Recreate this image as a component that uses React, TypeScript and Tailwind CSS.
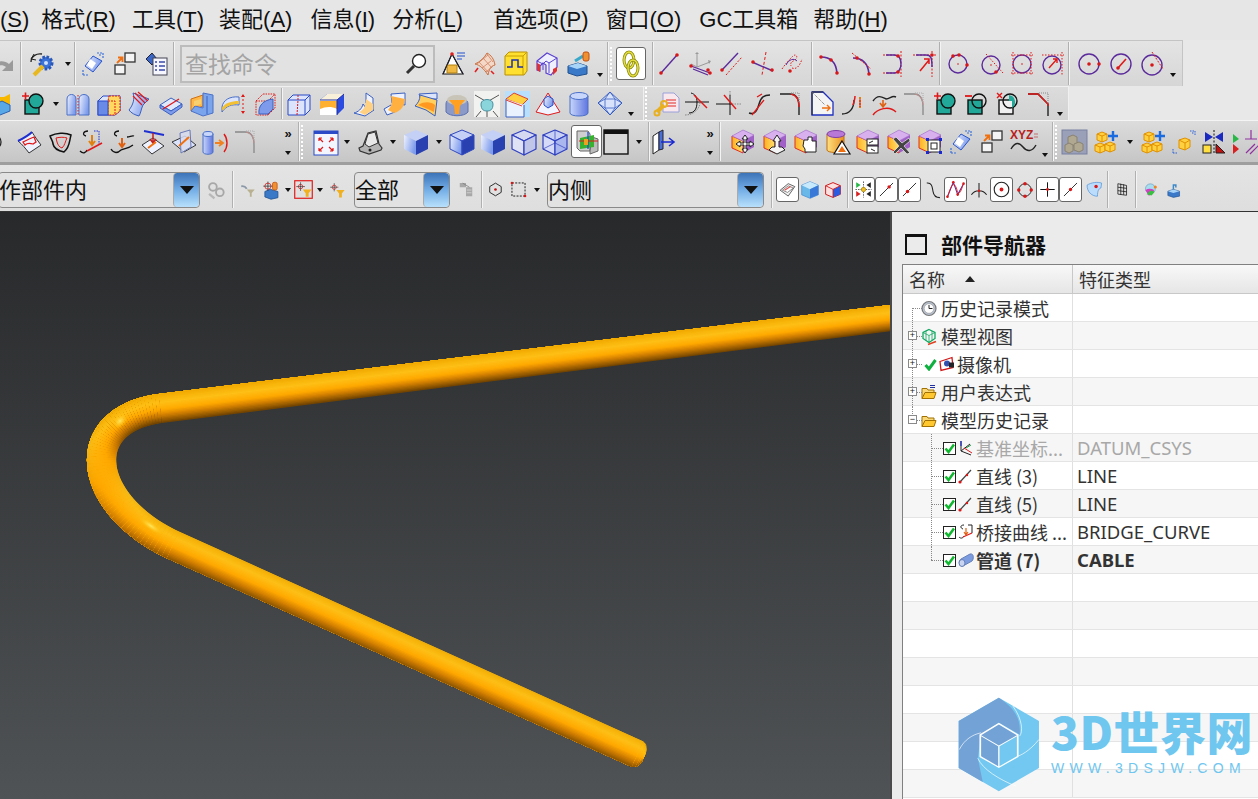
import React from "react";

const cjk = "font-['Noto_Sans_CJK_SC',sans-serif]";

const P = "#5b2a9b", R = "#e01818";

const Svg = ({ s = 26, children }: { s?: number; children: React.ReactNode }) => (
  <svg width={s} height={s} viewBox="0 0 26 26" fill="none" className="block shrink-0 overflow-visible">{children}</svg>
);
const D = ({ x, y, r = 1.8, c = "#d81818" }: { x: number; y: number; r?: number; c?: string }) => <circle cx={x} cy={y} r={r} fill={c} />;
const Box = ({ a = "url(#gB)", b = "url(#gB)", c = "#3046b8", st = "#2a4ac8", sw = 1, o = 1 }: any) => (
  <g stroke={st} strokeWidth={sw} strokeLinejoin="round" fillOpacity={o}>
    <path d="M13 1 25 6 13 12 1 6Z" fill={a} />
    <path d="M1 6 13 12V26L1 20Z" fill={b} />
    <path d="M25 6 13 12V26L25 20Z" fill={c} />
  </g>
);
const Pbox = ({ children }: any) => (
  <>
    <path d="M13 1 24 6V18L13 24 2 19V7Z" fill="#c58be0" />
    <path d="M2 7 13 12V24L2 19Z" fill="url(#gY)" stroke="#e03020" />
    <path d="M13 12 24 6V18L13 24Z" fill="#a060c8" />
    <path d="M2 7 13 1 24 6 13 12Z" fill="#d8b0ee" stroke="#a070c8" strokeWidth=".6" />
    {children}
  </>
);
const Teal = ({ m }: { m: string }) => (
  <>
    <rect x="4" y="9" width="14" height="14" fill={m === "x" ? "#f0f0f0" : "#22a898"} stroke="#111" strokeWidth="1.400" />
    <circle cx="15" cy="10" r="7" fill={m === "+" ? "#22a898" : "none"} stroke="#111" strokeWidth="1.400" />
    {m === "x" && <path d="M15 9h3v7a7 7 0 0 0 3-7 7 7 0 0 0-6-6Z" fill="#22a898" transform="translate(-1 1)" />}
    {m === "+" && <path d="M1 5h7M4.500 1.500v7" stroke={R} strokeWidth="1.600" />}
    {m === "-" && <path d="M1 5h7" stroke={R} strokeWidth="1.800" />}
    {m === "x" && <path d="M2 2l5 5M7 2 2 7" stroke={R} strokeWidth="1.400" />}
  </>
);
const Sq2 = () => (
  <>
    <rect x="13" y="2" width="10" height="9" fill="#f4f4f4" stroke="#333" strokeWidth="1.300" />
    <rect x="3" y="14" width="10" height="9" fill="#f4f4f4" stroke="#333" strokeWidth="1.300" />
    <path d="M5 12 10 7M6 6.500h4.500V11" stroke="#f07010" strokeWidth="1.800" />
  </>
);
const Sync = () => (
  <>
    <path d="M13 5 22 10 13 21 5 15Z" fill="url(#gB)" stroke="#2a55c8" />
    <path d="M10 8 16 12 12 18 7 14Z" fill="#fff" />
    <path d="M17 2h6v6M19 4h3M3 24v-6M3 24h6" stroke="#3a70d8" strokeDasharray="2 1" strokeWidth="1.200" />
  </>
);
const Blocks = () => (
  <g stroke="#e09000" fill="#ffd040" strokeWidth="1">
    <path d="M4 4l5-2 5 2v6l-5 2-5-2Z" /><path d="M4 4l5 2 5-2M9 6v6" fill="none" />
    <path d="M2 15l5-2 5 2v6l-5 2-5-2Z" /><path d="M2 15l5 2 5-2M7 17v6" fill="none" />
    <path d="M12 14l5-2 5 2v6l-5 2-5-2Z" /><path d="M12 14l5 2 5-2M17 16v6" fill="none" />
  </g>
);

const ic: Record<string, React.ReactNode> = {
  redo: <path d="M-8 20C-4 10 6 8 12 13L16 9V20H5L9 16C5 13-1 14-8 20Z" fill="#9a9a9a" />,
  gear: (
    <>
      <circle cx="17" cy="12" r="6" fill="#3a72d8" stroke="#2a58b8" strokeWidth="3" strokeDasharray="2.500 1.500" />
      <circle cx="17" cy="12" r="2" fill="#cfe0ff" />
      <path d="M14 15 5 24" stroke="#e8b820" strokeWidth="4" />
      <path d="M2 11C2 5 8 2 13 3" stroke="#222" strokeWidth="1.300" />
      <path d="M5 3 2 8l5 1" stroke="#222" strokeWidth="1" />
    </>
  ),
  sync: <Sync />,
  sq2: <Sq2 />,
  list: (
    <>
      <path d="M3 8 9 2l5 6-5 6Z" fill="#3a66c8" stroke="#223" />
      <rect x="10" y="7" width="14" height="17" fill="#f6f6ff" stroke="#445" />
      <path d="M12 11h2M16 11h6M12 15h2M16 15h6M12 19h2M16 19h6" stroke="#3a4aa8" strokeWidth="1.600" />
    </>
  ),
  pyr: (
    <>
      <path d="M11 3 2 23h20Z" fill="#fff" stroke="#111" strokeWidth="1.200" />
      <path d="M6 14h10v8H6Z" fill="#f0b840" stroke="#b08010" />
      <path d="M2 23 11 3l11 20" stroke="#223" />
      <circle cx="11" cy="3" r="1.800" fill="#e02020" />
      <path d="M16 2h8M16 5h8M16 8h5" stroke="#2050d0" strokeWidth="1.200" />
    </>
  ),
  grid: (
    <>
      <path d="M3 13C8 11 13 6 15 2c4 2 7 6 8 12-4 1-6 4-7 10C12 18 8 14 3 13Z" fill="#f4d8c8" stroke="#c87040" />
      <path d="M7 11l10 11M11 7l9 10M15 3l6 8M5 13l11-9M10 17l9-7M14 21l7-6" stroke="#d08060" strokeWidth=".8" />
      <path d="M6 17l-3 4M19 20l3 3" stroke="#e02020" strokeWidth="1.600" />
    </>
  ),
  ybox: (
    <>
      <path d="M2 5 6 1H24V20L21 24H2Z" fill="#ffe030" stroke="#b89000" />
      <path d="M2 5H20V24M20 5 24 1" stroke="#c8a000" />
      <path d="M4 16H9V9H15V16H20" stroke="#2030b0" strokeWidth="1.500" />
    </>
  ),
  frame: (
    <>
      <path d="M3 10 13 2l10 5v9l-6 8-5-2v-8l-3-2-3 3v5l-3-1Z" fill="#eef0ff" stroke="#5a40d0" strokeWidth="1.200" />
      <path d="M3 10l6 3 3-3 3 2 8-5M9 13v6M15 12v10" stroke="#5a40d0" />
      <path d="M3 19v-7l3 1.500V21Z" fill="#e03030" />
      <path d="M19 24v-6l4-2v4Z" fill="#e03030" />
    </>
  ),
  bfun: (
    <>
      <path d="M3 15 13 12 22 15V23L12 25 3 22Z" fill="#3a78c8" stroke="#205090" />
      <path d="M3 15 12 18 22 15 13 12Z" fill="#a8d4f8" />
      <path d="M10 10l8-5" stroke="#3aa8c8" strokeWidth="3" />
      <rect x="18" y="1" width="6" height="9" rx="2" fill="#f09030" stroke="#c05010" />
    </>
  ),
  chain: (
    <>
      <ellipse cx="11" cy="9" rx="5" ry="8" stroke="#8a8a10" strokeWidth="3" />
      <ellipse cx="11" cy="9" rx="5" ry="8" stroke="#e8e040" strokeWidth="1.400" />
      <ellipse cx="15" cy="17" rx="5" ry="8" stroke="#8a8a10" strokeWidth="3" />
      <ellipse cx="15" cy="17" rx="5" ry="8" stroke="#e8e040" strokeWidth="1.400" />
    </>
  ),
  l1: <><path d="M5 22 21 4" stroke={P} strokeWidth="1.400" /><D x={5} y={22} /><D x={21} y={4} /></>,
  l2: (
    <>
      <path d="M10 16V3M10 16l13-5M10 16l-6-3" stroke="#999" />
      <path d="M8 3h4L10 1Z M21 9l3 1-2 3Z" fill="#999" />
      <path d="M4 15 23 22M6 18l15 6" stroke={P} strokeWidth="1.300" />
      <D x={4} y={15} /><D x={23} y={22} /><D x={21} y={19} />
    </>
  ),
  l3: <><path d="M4 19 20 2" stroke={P} strokeWidth="1.400" /><path d="M8 24 24 6" stroke={R} strokeDasharray="2 1.500" /><D x={4} y={19} /></>,
  l4: <><path d="M17 1 13 24" stroke={R} strokeDasharray="3 2" /><path d="M3 11 24 20" stroke={P} strokeWidth="1.400" /><D x={4} y={11} /><D x={23} y={19} /></>,
  l5: (
    <>
      <path d="M2 18C6 12 10 8 13 5c4-3 5 2 2 4-3 2-5 2-4 6" stroke={R} strokeDasharray="1.500 1.500" />
      <path d="M12 17c5 2 8-3 10-9" stroke={R} strokeDasharray="1.500 1.500" />
      <path d="M6 14c3-6 8-7 11-4" stroke={P} /><D x={10} y={20} />
    </>
  ),
  a1: <><path d="M4 6C13 6 19 11 20 22" stroke={P} strokeWidth="1.600" /><D x={4} y={6} /><D x={14} y={9} /><D x={20} y={22} /></>,
  a2: <><path d="M4 7C13 7 19 12 20 23" stroke={P} strokeWidth="1.600" /><path d="M3 2 22 18" stroke={R} strokeDasharray="2 1.500" /><D x={8} y={7} /><D x={20} y={23} /></>,
  a3: <><path d="M3 4H17M3 22H17M21 0V26" stroke={R} strokeDasharray="2 1.500" /><path d="M6 4h8c6 0 7 5 7 9s-2 9-7 9H6" stroke={P} strokeWidth="1.400" /><D x={18} y={5} /><D x={18} y={21} /></>,
  a4: <><path d="M2 4H26M21 0V26" stroke={R} strokeDasharray="2 1.500" /><path d="M5 4h10c5 0 6 3 6 12" stroke={P} strokeWidth="1.400" /><path d="M9 20 18 9M13 8h5v5" stroke={R} strokeWidth="1.500" /><D x={21} y={4} /></>,
  c1: <><circle cx="13" cy="13" r="9" stroke={P} strokeWidth="1.400" /><D x={8} y={5} /><D x={14} y={4} /><D x={22} y={14} /><D x={13} y={13} r={.8} /></>,
  c2: <><circle cx="13" cy="14" r="9" stroke={P} strokeWidth="1.400" /><path d="M8 3 25 22" stroke={R} strokeDasharray="1.500 1.500" /><D x={18} y={21} /><D x={13} y={14} r={.8} /></>,
  c3: <><circle cx="13" cy="13" r="9" stroke={P} strokeWidth="1.400" /><path d="M2 4H24M2 22H24M4 1V25M22 1V25" stroke={R} strokeDasharray="1.500 1.500" /><D x={13} y={13} r={.8} /></>,
  c4: <><circle cx="12" cy="14" r="9" stroke={P} strokeWidth="1.400" /><path d="M2 4H24M22 1V25" stroke={R} strokeDasharray="1.500 1.500" /><path d="M9 17 17 8M13 8h4v4" stroke={R} strokeWidth="1.400" /></>,
  e1: <><circle cx="13" cy="13" r="10" stroke={P} strokeWidth="1.400" /><D x={13} y={13} /><D x={23} y={13} /></>,
  e2: <><circle cx="13" cy="13" r="10" stroke={P} strokeWidth="1.400" /><path d="M10 17 18 8" stroke={R} strokeWidth="1.600" /><D x={10} y={17} /></>,
  e3: <><circle cx="13" cy="14" r="10" stroke={P} strokeWidth="1.400" /><path d="M13 1 24 18" stroke={R} strokeDasharray="2 1.500" /><D x={13} y={14} /></>,
  cutL: <><path d="M-6 6H8L14 3V14L8 19-6 18Z" fill="#f8b800" /><path d="M-4 15 6 10 14 14V20L4 24-4 20Z" fill="#58a8e8" stroke="#2a60b0" /></>,
  tplus: <Teal m="+" />,
  tminus: <Teal m="-" />,
  tx: <Teal m="x" />,
  arch: (
    <>
      <path d="M2 24V8C2 2 11 2 11 8V24Z" fill="url(#gB)" stroke="#4a70c8" />
      <path d="M14 24V8C14 2 24 2 24 8V24Z" fill="url(#gB)" stroke="#4a70c8" />
      <path d="M13 4V24" stroke={R} strokeDasharray="1.500 1.500" />
    </>
  ),
  hbox: (
    <>
      <path d="M2 10 7 5H24V20L19 24H2Z" fill="#dbe4fb" stroke="#2a4ac8" />
      <path d="M13 5H24V20L19 24H12V10Z" fill="#ffd860" stroke={R} strokeDasharray="2 1" />
      <rect x="2" y="10" width="10" height="14" fill="#6a8ae8" stroke="#2a4ac8" />
      <path d="M12 10H19V24" stroke={R} strokeDasharray="2 1" />
    </>
  ),
  slit: (
    <>
      <path d="M6 2 22 8 16 14C14 18 14 22 12 25 8 24 4 22 2 19 6 14 8 8 6 2Z" fill="url(#gB)" stroke="#3a60c0" />
      <path d="M8 2 18 12M11 1 21 10M6 5 15 14" stroke={R} strokeWidth="1.200" />
    </>
  ),
  plate: <><path d="M2 14 13 7 24 13 13 20Z" fill="#e0e8fc" stroke="#3a60c0" /><path d="M2 14V17L13 24 24 16V13L13 20Z" fill="#7e9aea" stroke="#3a60c0" /><path d="M5 18 21 8" stroke={R} strokeWidth="1.300" /></>,
  pocket: (
    <>
      <path d="M2 8 14 4V15L2 20Z" fill="#ffb848" stroke="#d07010" />
      <path d="M14 2 24 4V22L14 25 2 20 6 15 14 17Z" fill="#7aa4ec" stroke="#4a70c8" />
      <path d="M5 10 12 8V13L5 15Z" fill="#f8d070" />
      <path d="M18 5V23" stroke="#3a60c0" />
    </>
  ),
  band: (
    <>
      <path d="M2 16C3 9 10 5 19 6V14C12 13 6 15 2 21Z" fill="#dbe4fb" stroke="#4a70c8" />
      <path d="M2 17C5 12 11 10 19 10V13C12 13 6 15 3 20Z" fill="#f2c030" />
      <path d="M23 4V22" stroke={R} strokeDasharray="2 2" /><path d="M21 6l2-3 2 3M21 20l2 3 2-3" fill={R} />
    </>
  ),
  dashc: (
    <>
      <path d="M5 10 12 3H24V17L17 24H5Z" fill="none" stroke={R} strokeDasharray="1.500 1" />
      <path d="M5 10H17V24M17 10 24 3" stroke={R} strokeDasharray="1.500 1" />
      <path d="M8 23C7 15 12 9 22 8V18L17 23Z" fill="#7e9aea" stroke="#3a60c0" />
    </>
  ),
  cubeL: (
    <>
      <path d="M2 9 7 4H24V19L19 24H2Z" fill="#dbe4fb" stroke="#2a4ac8" />
      <path d="M2 9H19V24M19 9 24 4" stroke="#2a4ac8" />
      <path d="M12 4V9L11 24" stroke={R} strokeDasharray="2 1" />
    </>
  ),
  orb: (
    <>
      <path d="M1 9 8 3H25V17L18 24H1Z" fill="#2a4ae0" />
      <path d="M1 9 8 3H25L18 9Z" fill="#f8f0d8" />
      <path d="M1 9H18V24H1Z" fill="#fff" />
      <path d="M1 10H18V18C12 15 6 16 1 18Z" fill="#ffb030" />
      <path d="M1 9H18V24M18 9 25 3" stroke="#2030a0" />
    </>
  ),
  f1: (
    <>
      <path d="M15 2 22 7V18L15 12Z" fill="#eef2ff" stroke="#3a60c0" />
      <path d="M3 22 14 25 23 19 15 17 12 13C11 18 7 21 3 22Z" fill="#eef2ff" stroke="#3a60c0" />
      <path d="M8 21C13 19 15 15 15 8L22 13V19L14 24Z" fill="#ffd080" />
    </>
  ),
  f2: (
    <>
      <path d="M9 3 23 2V14L10 12Z" fill="#eef2ff" stroke="#3a60c0" />
      <path d="M2 18 9 14 13 21 5 24Z" fill="#eef2ff" stroke="#3a60c0" />
      <path d="M9 5C11 13 9 15 6 19L12 22C19 20 22 16 23 8Z" fill="#ffb040" />
    </>
  ),
  f3: (
    <>
      <path d="M6 3 24 2V8H8Z" fill="#dbe4fb" stroke="#3a60c0" />
      <path d="M2 15 13 19 22 25 24 9 7 4C7 9 5 12 2 15Z" fill="#ffd060" stroke="#3a60c0" />
      <path d="M5 14C12 10 18 11 22 14L21 21C16 18 10 16 5 14Z" fill="#ff9820" />
    </>
  ),
  bowl: (
    <>
      <path d="M2 13C2 4 24 4 24 13V21C20 26 6 26 2 21Z" fill="#8c9ac8" stroke="#5a70b0" />
      <ellipse cx="13" cy="9" rx="10" ry="5" fill="#c8c4b8" />
      <path d="M5 9H21L16 15 15 23H11L10 15Z" fill="#ffa020" />
    </>
  ),
  tcorner: (
    <>
      <rect x="0" y="0" width="26" height="26" fill="#f2f2f0" />
      <path d="M1 4 13 11 25 4M13 20V26M2 26l5-6M24 26l-5-6" stroke="#555" />
      <path d="M7 13C7 7 19 7 19 13C19 19 16 20 13 20 10 20 7 19 7 13Z" fill="#8ad4dc" stroke="#4a90a0" />
    </>
  ),
  tchamf: (
    <>
      <rect x="1" y="0" width="25" height="26" fill="#b8e0fc" />
      <path d="M2 8 10 2 24 8 18 14 2 8Z" fill="#ffd040" stroke="#e04030" />
      <path d="M2 8V26H20V14" fill="#eaf2ff" stroke="#3a60c0" />
      <path d="M2 9 18 15" stroke="#e04030" />
    </>
  ),
  pyrR: (
    <>
      <path d="M13 2 25 21 13 24 1 21Z" fill="#f0f4ff" stroke={R} />
      <path d="M9 8 13 5 18 8V14L13 17 9 14Z" fill="url(#gB)" stroke="#2a4ac8" />
    </>
  ),
  cyl: (
    <>
      <path d="M4 5V22C4 26 22 26 22 22V5Z" fill="url(#gB2)" stroke="#4a70c8" />
      <ellipse cx="13" cy="5" rx="9" ry="3.500" fill="#c8d6fb" stroke="#4a70c8" />
    </>
  ),
  gem: (
    <>
      <path d="M13 1 25 12 13 24 1 12Z" fill="#d8e2fb" stroke="#3a60c0" />
      <path d="M1 12 8 8 13 1 18 8 25 12 18 17 13 24 8 17ZM8 8H18M8 17H18M8 8V17M18 8V17" stroke="#3a60c0" strokeWidth=".8" />
    </>
  ),
  wrdoc: (
    <>
      <path d="M9 2H20L25 7V21H9Z" fill="#f8e8ee" stroke="#9aa0d8" />
      <path d="M12 9h10M12 12h10M12 15h10" stroke="#e86868" strokeWidth="1.300" />
      <path d="M10 14 3 21" stroke="#e8b020" strokeWidth="4" />
      <circle cx="10" cy="13" r="3" stroke="#e8b020" strokeWidth="2" />
      <circle cx="3" cy="22" r="2.500" stroke="#e8b020" strokeWidth="2" />
    </>
  ),
  trim1: <><path d="M0 11H24" stroke="#111" /><path d="M4 22C10 22 12 17 12 11 12 6 10 3 6 2" stroke="#111" /><path d="M0 24C8 24 14 19 15 12" stroke="#888" strokeDasharray="1.500 1" /><path d="M9 4 22 17" stroke={R} strokeWidth="1.400" /></>,
  trim2: <><path d="M0 13H16M14 4V24" stroke="#111" /><path d="M16 13H25M14 0V10" stroke="#888" strokeDasharray="1.500 1" /><path d="M8 4 20 18" stroke={R} strokeWidth="1.400" /></>,
  scurve: <><path d="M2 22C8 24 10 20 12 13 14 6 17 4 23 4" stroke="#222" strokeWidth="1.400" /><path d="M5 24 17 9M10 6l5-3" stroke={R} strokeWidth="1.300" /></>,
  fil: <><path d="M2 3H12C18 3 21 8 21 16V24" stroke="#222" strokeWidth="1.400" /><path d="M13 3C18 4 21 8 21 16" stroke={R} strokeWidth="1.400" /><path d="M13 2H21V12" stroke="#888" strokeDasharray="1 1" /></>,
  sheet: <><path d="M3 1H14L24 11V24H3Z" fill="#f4f4f4" stroke="#2030c0" strokeWidth="1.300" /><path d="M3 24V1H14" stroke="#222" /><path d="M3 1 16 14" stroke="#666" strokeDasharray="1 1" /><path d="M13 17H21M18 14l3 3-3 3" stroke="#f07010" strokeWidth="1.400" /></>,
  brk: <><path d="M2 23C9 23 14 18 14 9" stroke="#222" strokeWidth="1.400" /><path d="M13 14C14 11 15 8 15 5" stroke={R} strokeWidth="1.500" /><path d="M20 6V18" stroke="#e08010" strokeWidth="2" strokeDasharray="2 1" /><path d="M20 8V16" stroke={R} /></>,
  flow: <><path d="M2 10C7 3 11 6 15 8 19 8 21 4 25 6" stroke="#222" strokeWidth="1.400" /><path d="M2 24C6 18 18 14 25 21" stroke={R} strokeWidth="1.400" /><path d="M12 9V15M9 12l3 4 3-4" stroke="#e06010" strokeWidth="1.600" /></>,
  filG: <><path d="M2 3H12C18 3 21 8 21 16V24" stroke="#888" strokeWidth="1.300" /><path d="M13 3C18 4 21 8 21 14" stroke="#c89090" /><path d="M13 2H21V12" stroke="#aaa" strokeDasharray="1 1" /></>,
  chamfR: <><path d="M2 3H12L22 13V25" stroke="#222" strokeWidth="1.400" /><path d="M2 3H12L22 13V15" stroke={R} strokeWidth="1.400" /><path d="M13 2H22V12" stroke="#888" strokeDasharray="1 1" /></>,
  targ: <><circle cx="0" cy="13" r="7" stroke="#222" strokeWidth="1.300" /><circle cx="0" cy="13" r="2.500" stroke="#c02020" strokeWidth="1.300" /></>,
  patch: <><path d="M2 12C8 9 13 6 16 3 19 8 22 12 25 16L13 24C10 20 6 15 2 12Z" fill="#eef2ff" stroke="#333" /><path d="M2 12C8 9 13 6 16 3" stroke="#2030d0" strokeWidth="2" /><path d="M7 13C11 11 15 9 18 8L20 13 17 15C14 14 11 14 9 16Z" stroke={R} strokeWidth="1.300" /></>,
  outl: <><path d="M3 7C9 4 18 3 24 6 22 13 23 18 17 23 12 22 7 20 6 15 6 12 4 10 3 7Z" stroke="#111" strokeWidth="1.500" /><path d="M9 9C13 8 17 8 20 9 18 13 18 16 15 19 12 18 11 16 10 13Z" stroke={R} /></>,
  br1: <><path d="M10 2C5 2 4 6 8 7M2 22C5 25 8 24 9 21" stroke="#111" strokeWidth="1.300" /><path d="M16 2H21V16" stroke="#2030d0" strokeDasharray="1.500 1" /><path d="M9 22 24 14" stroke={R} strokeWidth="1.500" /><path d="M14 6V15M11 12l3 4 3-4" stroke="#e08010" strokeWidth="2" /></>,
  br2: <><path d="M10 2C5 2 4 6 8 7M18 8C21 8 23 6 25 7M2 20C5 25 9 24 12 21 15 19 19 20 24 16" stroke="#111" strokeWidth="1.300" /><path d="M13 9V18M10 14l3 4 3-4" stroke="#e06010" strokeWidth="2" /></>,
  pl1: <><path d="M2 16 13 9 24 17 12 25Z" fill="#eef2ff" stroke="#333" /><path d="M4 2 24 6" stroke="#2030d0" strokeWidth="1.800" /><path d="M13 4V13M10 10l3 4 3-4" stroke="#c02020" strokeWidth="1.500" /><path d="M8 19 16 13" stroke="#f07010" strokeWidth="2" /></>,
  pl2: <><path d="M1 13 14 7 25 16 13 23Z" fill="#dbe4fb" stroke="#333" /><path d="M9 4 19 1 20 18 10 24Z" fill="#d8dcec" fillOpacity=".85" stroke="#6a7ab8" /><path d="M8 17 18 8" stroke="#f07010" strokeWidth="2" /></>,
  ext: <><path d="M1 5V23C1 26 11 26 11 23V5Z" fill="url(#gB2)" stroke="#4a70c8" /><ellipse cx="6" cy="5" rx="5" ry="2.500" fill="#c8d6fb" stroke="#4a70c8" /><path d="M13 14H20M17 11l4 3-4 3" stroke="#f08020" strokeWidth="1.800" /><path d="M22 5C26 10 26 18 22 23" stroke={R} strokeWidth="1.400" /></>,
  fit: <><rect x="1" y="2" width="24" height="24" fill="#f4f6ff" stroke="#2a4ac8" /><rect x="1" y="2" width="24" height="3" fill="#2a4ac8" /><path d="M6 9l4 4M6 9h3M6 9v3M20 9l-4 4M20 9h-3M20 9v3M6 22l4-4M6 22h3M6 22v-3M20 22l-4-4M20 22h-3M20 22v-3" stroke={R} strokeWidth="1.200" /></>,
  lens: <><path d="M2 19 6 17 11 4 19 2 22 15 25 19 24 21 12 25 3 22Z" fill="#b4b4b4" stroke="#333" strokeWidth="1.200" /><path d="M8 15 11 5 18 3 21 14 12 18Z" fill="#e8e8e8" stroke="#333" /><circle cx="13" cy="21" r="1.500" fill="#222" /></>,
  cubeS: <Box a="#c4d0f6" b="url(#gB)" c="#2840b0" st="none" />,
  cubeE: <Box a="#c4d0f6" b="url(#gB)" c="#2840b0" st="#3048c0" />,
  cubeW: <Box a="#d4d8f0" b="#dfe2f4" c="#c0c6e8" st="#3040c0" sw={1.200} />,
  cubeH: (
    <>
      <Box a="#c8d0f4" b="#d4daf8" c="#aab6ee" st="#3040c0" sw={1.200} />
      <path d="M1 20 13 14 25 20M13 1V14" stroke="#3040c0" strokeWidth=".7" />
    </>
  ),
  persp: (
    <>
      <path d="M3 2H14L16 5V22H6L3 19Z" fill="#cfcfcf" stroke="#666" />
      <path d="M18 8 24 10V22L16 25V22Z" fill="#bbb" stroke="#666" />
      <path d="M6 9 20 6V18L6 20Z" fill="#38b030" />
      <path d="M14 3V20" stroke="#2050e0" strokeWidth="1.300" /><path d="M5 12H24" stroke={R} strokeWidth="1" /><path d="M10 10h4v6h-4z" fill="#f0a020" />
    </>
  ),
  back: <><rect x="1" y="1" width="24" height="24" fill="#d8d8d8" stroke="#111" strokeWidth="1.400" /><rect x="1" y="1" width="24" height="4" fill="#111" /></>,
  pane: <><path d="M3 7 9 3V21L3 25Z" fill="#fff" stroke="#222" /><path d="M9 3 13 1V20L9 21Z" fill="#4a70d8" stroke="#223" /><path d="M11 13H23M19 9l5 4-5 4" stroke="#1a2ad0" strokeWidth="1.600" /></>,
  move: <Pbox><path d="M15 6l3 4h-2v4h4v-2l4 3-4 3v-2h-4v4h2l-3 4-3-4h2v-4H10v2l-4-3 4-3v2h4v-4h-2Z" fill="#f4f4f4" stroke="#222" /></Pbox>,
  lift: <Pbox><path d="M15 6l4 6h-2v6h3l3 3-8 4-8-4 3-3h3v-6h-2Z" fill="#f4f4f4" stroke="#222" /></Pbox>,
  hand: <Pbox><path d="M11 11h4v-3h4v4h4v11H12v-3l-2-3Z" fill="#fff" stroke="#222" /></Pbox>,
  cone: (
    <>
      <path d="M3 5V21C3 24 17 24 20 23V5Z" fill="url(#gY2)" stroke="#c07010" />
      <ellipse cx="12" cy="5" rx="9" ry="3.500" fill="#b878d8" stroke="#8040a8" />
      <path d="M18 12 26 25H10Z" fill="#fff" stroke="#111" strokeWidth="1.200" />
      <path d="M18 17 22 23H14Z" fill="#f07010" />
    </>
  ),
  rep: <Pbox><rect x="12" y="10" width="11" height="6" fill="#fff" stroke="#222" /><rect x="12" y="17" width="11" height="7" fill="#fff" stroke="#222" /><path d="M14 14l4-2M16 20l4 2" stroke="#222" /></Pbox>,
  del: <Pbox><path d="M7 10l3-2 6 6 7-5 1 3-6 5 6 7-3 1-6-6-6 6-2-2 6-6Z" fill="#444" stroke="#fff" strokeWidth=".6" /></Pbox>,
  res: <Pbox><rect x="11" y="11" width="12" height="12" fill="#fff" stroke="#222" /><rect x="14" y="14" width="6" height="6" fill="none" stroke="#222" /><rect x="9" y="9" width="3" height="3" fill="#1a2ad0" /><rect x="22" y="9" width="3" height="3" fill="#1a2ad0" /><rect x="9" y="22" width="3" height="3" fill="#1a2ad0" /><rect x="22" y="22" width="3" height="3" fill="#1a2ad0" /></Pbox>,
  xyz: (
    <>
      <text x="0" y="10" fontSize="12" fontWeight="700" fill="#b82020" fontFamily="Liberation Sans, sans-serif">XYZ</text>
      <path d="M24 5h4M24 8h4" stroke="#c89090" strokeWidth="1.600" />
      <path d="M1 20C5 13 9 13 13 18 17 23 22 23 26 16" stroke="#222" strokeWidth="1.400" />
    </>
  ),
  asm: (
    <>
      <rect x="0" y="1" width="25" height="24" fill="#9aa0b8" stroke="#7880a0" />
      <path d="M6 8l5-2 4 2v7l-4 2-5-2Z" fill="#b0a890" stroke="#8a8270" />
      <path d="M3 16l4-2 4 2v6l-4 2-4-2Z" fill="#b0a890" stroke="#8a8270" />
      <path d="M12 15l5-2 4 2v6l-4 2-5-2Z" fill="#b0a890" stroke="#8a8270" />
    </>
  ),
  blkP: <><g transform="translate(0 1)"><Blocks /></g><path d="M20 2V12M15 7H25" stroke="#1a6ae0" strokeWidth="2.400" /></>,
  blkD: (
    <>
      <g stroke="#e09000" fill="#ffd040"><path d="M9 11l6-2 5 2v7l-5 3-6-2Z" /><path d="M9 11l6 3 5-3M15 14v7" fill="none" /></g>
      <path d="M20 2h5v5M22 4h2M3 24v-5M3 24h5" stroke="#2a60d8" strokeDasharray="1.500 1" />
    </>
  ),
  mirror: (
    <>
      <path d="M4 3 12 8 4 13ZM22 3 14 8 22 13Z" fill="#1a2ac0" />
      <path d="M13 1V25" stroke="#111" strokeDasharray="2 1.500" />
      <rect x="2" y="16" width="8" height="8" fill="#ffe040" stroke="#222" />
      <path d="M15 15 24 24H15Z" fill="#c01010" stroke="#222" />
    </>
  ),
  cons: <><path d="M1 5 7 10 1 14Z" fill="#28b848" /><path d="M1 15 7 20 1 25Z" fill="#d82020" /><path d="M13 10H25M19 1V10" stroke="#9030a0" strokeWidth="1.200" /><path d="M14 24 23 15M18 25 27 16" stroke="#9030a0" strokeWidth="1.200" /></>,
  ring2: <><circle cx="9" cy="9" r="5" stroke="#a8a8a8" strokeWidth="2.400" /><circle cx="18" cy="16" r="5" stroke="#a8a8a8" strokeWidth="2.400" /><path d="M4 18l7 6" stroke="#b8b8b8" strokeWidth="3" /></>,
  wrf: <><path d="M2 7c4-1 7 1 9 4" stroke="#8a98a8" strokeWidth="3" /><path d="M11 12H24L19 18V24H16V18Z" fill="#b8b090" /></>,
  tbox: <><path d="M5 15 12 12 22 15V23L13 25 5 22Z" fill="#3a78c8" stroke="#205090" /><circle cx="9" cy="8" r="4" stroke={R} strokeWidth="1" /><path d="M9 2V14M3 8H15" stroke="#222" strokeWidth=".9" /><rect x="15" y="3" width="6" height="10" rx="2" fill="#f09030" stroke="#c05010" /></>,
  fsel: <><rect x="1" y="1" width="24" height="24" fill="none" stroke={R} strokeWidth="1.600" /><circle cx="9" cy="9" r="3" stroke={R} /><path d="M9 3V15M3 9H15" stroke="#222" strokeWidth=".8" /><path d="M12 13H24L20 18V23H16V18Z" fill="#f0b020" /></>,
  fpt: <><circle cx="9" cy="9" r="3" stroke={R} /><path d="M9 3V15M3 9H15" stroke="#222" strokeWidth=".8" /><path d="M12 13H24L20 18V24H16V18Z" fill="#f0b020" /></>,
  chainG: <><path d="M4 3h9v6H4ZM13 9h9v13H13Z" fill="#a8a8a8" /><path d="M8 3 18 9" stroke="#777" /><path d="M14 13h7M14 17h7" stroke="#e0e0e0" /></>,
  hex: <><path d="M13 2 23 8V18L13 24 3 18V8Z" stroke="#222" strokeWidth="1.600" transform="translate(1.500 1.500) scale(.88)" /><circle cx="13" cy="13" r="2" fill="#c01010" /></>,
  dsq: <><path d="M3 3H23V23H3Z" stroke="#111" strokeWidth="1.400" strokeDasharray="3 2" /><D x={3} y={3} r={2} /><D x={23} y={23} r={2} /></>,
  v1: <><path d="M3 14 14 5 23 9 14 22Z" fill="#f2f2f2" stroke="#333" /><path d="M6 14l8-6 7 3-8 6Z" fill="#fff" stroke="#666" /><path d="M9 14l8-5" stroke="#e05050" strokeWidth="1.600" /></>,
  v2: <><path d="M13 1 25 6V20L13 25 1 20V6Z" fill="#6ab8e8" stroke="#3a88d8" /><path d="M1 6 13 12 25 6 13 1Z" fill="#c8e8fb" /><path d="M13 12 25 6V20L13 25Z" fill="#3a78d8" /></>,
  v3: <><path d="M13 1 25 6V20L13 25 1 20V6Z" fill="#fbe0e0" stroke="#d01818" strokeWidth="1.600" /><path d="M13 12 25 6V20L13 25Z" fill="#2a5ae0" /><path d="M1 6 13 12 25 6M13 12V25" stroke="#d01818" strokeWidth="1.400" /></>,
  all: <><path d="M13 2V24M2 13H24" stroke="#222" strokeDasharray="2 1.500" /><circle cx="13" cy="13" r="3" fill="#f0c020" stroke="#a08010" /><path d="M3 3l6 4-6 4Z" fill="#28b848" /><path d="M23 3l-6 4 6 4ZM23 15l-6 4 6 4Z" fill="#222" /><path d="M3 15l6 4-6 4Z" fill="#d82020" /></>,
  seg: <><path d="M3 23 23 3" stroke="#222" strokeWidth="1.400" /><D x={17} y={9} r={2.600} /></>,
  seg2: <><path d="M3 23 23 3" stroke="#222" strokeWidth="1.400" /><D x={10} y={16} r={2.600} /></>,
  sc: <path d="M4 3C12 2 12 10 13 15 14 22 17 24 23 24" stroke="#222" strokeWidth="1.500" />,
  spl: <><path d="M2 23 10 3 16 20 24 5" stroke={P} strokeWidth="1.400" /><path d="M2 23C6 12 8 4 12 7 16 12 15 19 18 18 21 16 22 9 24 5" stroke={R} strokeWidth="1.200" /><D x={10} y={3} /><D x={16} y={20} /><D x={2} y={23} /><D x={24} y={5} /></>,
  perp: <><path d="M2 20C7 12 19 12 24 20M13 3V24" stroke="#222" strokeWidth="1.500" /><D x={13} y={14} /></>,
  ctr: <><circle cx="13" cy="13" r="10" stroke="#222" strokeWidth="1.500" /><D x={13} y={13} r={2.600} /></>,
  quad: <><circle cx="13" cy="13" r="9" stroke="#222" strokeWidth="1.400" /><D x={13} y={4} r={2.500} /><D x={13} y={22} r={2.500} /><D x={4} y={13} r={2.500} /><D x={22} y={13} r={2.500} /></>,
  cross: <><path d="M13 2V24M2 13H24" stroke="#111" strokeWidth="1.500" /><D x={13} y={13} r={2.200} /></>,
  pm: <><path d="M3 23 23 3" stroke="#222" strokeWidth="1.400" /><D x={13} y={13} r={2.500} /></>,
  srf: <><path d="M3 6C9 2 18 1 24 3L23 10C20 11 18 14 18 22 10 22 3 16 3 6Z" fill="#bcdcfb" stroke="#4a90d8" /><D x={16} y={8} r={2.500} /></>,
  gridI: <path d="M5 3 20 6V23L5 21ZM10 3V22M15 4V22M5 9 20 11M5 15 20 17" stroke="#111" strokeWidth="1.300" />,
  rgb: <><circle cx="12" cy="11" r="8" fill="#a8dcf0" stroke="#6a98b8" /><path d="M4 13c5-3 10-2 14 0-2 8-6 9-9 9Z" fill="#d040c0" /><path d="M6 20l6-6 7 2-5 6Z" fill="#38c040" /><D x={20} y={8} r={2.500} c="#f08020" /></>,
  rbf: <><path d="M3 15 12 12 22 15V23L12 25 3 22Z" fill="#3a78c8" stroke="#205090" /><path d="M3 15 12 18 22 15 12 12Z" fill="#a8d4f8" /><path d="M12 12V5h4v4" stroke="#3a88c8" strokeWidth="2.400" /></>,
};

const I = ({ n, s = 26, w = "w-[31px]" }: { n: string; s?: number; w?: string }) => (
  <div className={`${w} flex justify-center items-center shrink-0`}>
    <Svg s={s}>{ic[n]}</Svg>
  </div>
);
const I4 = ({ n, s = 20, w = "w-[23px]" }: { n: string; s?: number; w?: string }) => <I n={n} s={s} w={w} />;
const Bx = ({ n, s = 20, w = "w-[23px]" }: { n: string; s?: number; w?: string }) => (
  <div className={`${w} flex justify-center shrink-0`}>
    <div className="w-[23px] h-[25px] rounded-[3px] border border-[#666] bg-white flex items-center justify-center">
      <Svg s={s - 3}>{ic[n]}</Svg>
    </div>
  </div>
);
const Caret = ({ w = "w-[12px]", cls = "" }: { w?: string; cls?: string }) => (
  <div className={`${w} ${cls} flex justify-center shrink-0`}>
    <div className="w-0 h-0 border-l-[3.5px] border-r-[3.5px] border-t-[4px] border-l-transparent border-r-transparent border-t-[#111]" />
  </div>
);
const Sep = ({ cls = "" }: { cls?: string }) => (
  <div className={`w-[2px] self-stretch my-[1px] shrink-0 border-l border-[#b0b0b0] bg-[#f4f4f4] ${cls}`} />
);
const Grip = () => <div className="w-[3px] h-[34px] mx-[1px] shrink-0 border-l-2 border-dotted border-white" />;
const Chev = () => (
  <div className="w-[14px] h-full flex flex-col items-center justify-between py-[7px] shrink-0">
    <span className="text-[13px] leading-[12px] font-bold font-['Liberation_Sans',sans-serif] text-[#111]">»</span>
    <Caret />
  </div>
);

const menu: [string, string, string][] = [
  ["", "S", "mr-[12px]"],
  ["格式", "R", "mr-[16px]"],
  ["工具", "T", "mr-[15px]"],
  ["装配", "A", "mr-[18px]"],
  ["信息", "I", "mr-[17px]"],
  ["分析", "L", "mr-[30px]"],
  ["首选项", "P", "mr-[17px]"],
  ["窗口", "O", "mr-[18px]"],
];

const Combo = ({ t, cls }: { t: string; cls: string }) => (
  <div className={`${cls} h-[36px] shrink-0 flex items-stretch rounded-[4px] border border-[#8a8a8a] bg-[#e2e2e2] overflow-hidden`}>
    <div className={`flex-1 text-[22px] leading-[31px] text-[#111] whitespace-nowrap ${cjk}`}>{t}</div>
    <div className="w-[26px] flex items-center justify-center bg-gradient-to-b from-[#3d74b8] via-[#74aee6] to-[#b8e0fb] border-l border-[#aaa] rounded-[4px]">
      <div className="w-0 h-0 border-l-[7px] border-r-[7px] border-t-[8px] border-l-transparent border-r-transparent border-t-[#111]" />
    </div>
  </div>
);

/* ---------- tube: a lit cylinder swept along the centre line ---------- */
function buildTube() {
  type S = { x: number; y: number; h: number };
  const bez = (p: number[][], n: number, h0: number, h1: number): S[] => {
    const out: S[] = [];
    for (let i = 0; i <= n; i++) {
      const t = i / n, u = 1 - t;
      out.push({
        x: u * u * u * p[0][0] + 3 * u * u * t * p[1][0] + 3 * u * t * t * p[2][0] + t * t * t * p[3][0],
        y: u * u * u * p[0][1] + 3 * u * u * t * p[1][1] + 3 * u * t * t * p[2][1] + t * t * t * p[3][1],
        h: h0 + (h1 - h0) * t,
      });
    }
    return out;
  };
  const endX = 644, endY = 757;
  const pts: S[] = [
    { x: 895, y: 317.5, h: 13 },
    ...bez([[160, 408.5], [125, 413], [101.5, 432], [101.5, 460]], 30, 14.6, 14.6),
    ...bez([[101.5, 460], [101.5, 490], [128, 524], [173, 545]], 30, 14.6, 14.6).slice(1),
  ];
  const dx = 0.9, dy = 0.41;
  const rest = 7;
  pts.push({ x: endX - dx * rest, y: endY - dy * rest, h: 14 });
  [0.5, 0.75, 0.9, 1].forEach((f) => {
    const d = rest * f;
    pts.push({ x: endX - dx * rest + dx * d, y: endY - dy * rest + dy * d, h: 14 * Math.sqrt(Math.max(0.08, 1 - f * f * 0.85)) });
  });

  /* u = 1 faces up, u = -1 faces down */
  const stops: [number, number[]][] = [
    [-1, [112, 66, 0]], [-0.8, [148, 90, 0]], [-0.45, [212, 128, 0]], [-0.1, [255, 168, 0]],
    [0.4, [255, 192, 22]], [1, [250, 176, 0]],
  ];
  const ramp = (u: number, edge: number) => {
    let c = stops[stops.length - 1][1];
    for (let i = 1; i < stops.length; i++) {
      if (u <= stops[i][0]) {
        const [a0, c0] = stops[i - 1], [a1, c1] = stops[i];
        const f = Math.max(0, (u - a0) / (a1 - a0));
        c = c0.map((v, k) => v + (c1[k] - v) * f);
        break;
      }
    }
    return `rgb(${c.map((v) => Math.round(v * edge)).join(",")})`;
  };
  const up = [-0.2, -0.98];
  const N = 22;
  const polys: { d: string; c: string }[] = [];
  const normal = (i: number) => {
    const a = pts[Math.max(0, i - 1)], b = pts[Math.min(pts.length - 1, i + 1)];
    const tx = b.x - a.x, ty = b.y - a.y, l = Math.hypot(tx, ty) || 1;
    return [-ty / l, tx / l];
  };
  for (let i = 0; i < pts.length - 1; i++) {
    const j = Math.min(pts.length - 1, i + (i > 0 && i < pts.length - 6 ? 2 : 1));
    const n0 = normal(i), n1 = normal(j);
    const ni1 = normal(i + 1);
    const nm = [(n0[0] + ni1[0]) / 2, (n0[1] + ni1[1]) / 2];
    const facing = nm[0] * up[0] + nm[1] * up[1];
    const p = (s: S, n: number[], t: number) => `${(s.x + n[0] * s.h * t).toFixed(1)} ${(s.y + n[1] * s.h * t).toFixed(1)}`;
    /* each band runs from its lower edge to the far edge, painted in order, so no seam shows */
    for (let b = 0; b < N; b++) {
      const t0 = -1 + (2 * b) / N, tm = t0 + 1 / N;
      const z = Math.sqrt(Math.max(0, 1 - tm * tm));
      polys.push({
        d: `M${p(pts[i], n0, t0)}L${p(pts[i], n0, 1)}L${p(pts[j], n1, 1)}L${p(pts[j], n1, t0)}Z`,
        c: ramp(tm * facing, 0.94 + 0.06 * z),
      });
    }
  }
  return polys;
}
const tube = buildTube();

const rows: { t: string; lvl: 0 | 1; box?: "+" | "-"; icon: string; check?: boolean; gray?: boolean; bold?: boolean; ty?: string }[] = [
  { t: "历史记录模式", lvl: 0, icon: "clock" },
  { t: "模型视图", lvl: 0, box: "+", icon: "view" },
  { t: "摄像机", lvl: 0, box: "+", icon: "cam", check: true },
  { t: "用户表达式", lvl: 0, box: "+", icon: "fold" },
  { t: "模型历史记录", lvl: 0, box: "-", icon: "fold2" },
  { t: "基准坐标...", lvl: 1, icon: "csys", gray: true, ty: "DATUM_CSYS" },
  { t: "直线 (3)", lvl: 1, icon: "line", ty: "LINE" },
  { t: "直线 (5)", lvl: 1, icon: "line", ty: "LINE" },
  { t: "桥接曲线 ...", lvl: 1, icon: "bridge", ty: "BRIDGE_CURVE" },
  { t: "管道 (7)", lvl: 1, icon: "pipe", bold: true, ty: "CABLE" },
];

const tico: Record<string, React.ReactNode> = {
  clock: <><circle cx="8" cy="8" r="7" fill="#b8c2d0" stroke="#777" strokeWidth="1.200" /><circle cx="8" cy="8" r="4.800" fill="#fff" stroke="#888" strokeWidth=".5" /><path d="M8 4.500V8H11.500" stroke="#222" /></>,
  view: <><path d="M8 1 14 4V10L8 14 2 10V4Z" stroke="#10a860" strokeWidth="1.300" /><path d="M2 4 8 7 14 4M8 7V14M5 2.500V12M11 2.500V12" stroke="#10a860" strokeWidth=".8" /><path d="M7 16 15 13" stroke="#e04020" strokeWidth="1.400" /></>,
  cam: <><path d="M1 5 13 1 14 11 2 14Z" fill="#fff" stroke="#d01818" strokeWidth="1.300" /><circle cx="8" cy="7" r="3" fill="#3050b0" /><rect x="10" y="6" width="5" height="5" fill="#222" /></>,
  fold: <><path d="M1 14V4H6L7 5.500H13V8" stroke="#a07000" fill="#f8d878" /><path d="M1 14 4 8H15L13 14Z" fill="#ffc830" stroke="#a07000" /><path d="M9 1h5M9 3h5" stroke="#2030a0" /></>,
  fold2: <><path d="M1 14V4H6L7 5.500H13V8" stroke="#a07000" fill="#f8d878" /><path d="M1 14 4 8H15L13 14Z" fill="#ffc830" stroke="#a07000" /></>,
  csys: <><path d="M3 1V11L13 15M3 11 12 4" stroke="#222" /><path d="M3 1V6" stroke="#2030d0" strokeWidth="1.200" /><path d="M6 8 14 13" stroke={R} /><path d="M8 8l5-3" stroke="#20a040" /></>,
  line: <><path d="M2 14 13 2" stroke="#444" strokeWidth="1.200" /><D x={2} y={14} r={1.600} /><D x={9} y={7} r={1.200} /></>,
  bridge: <><path d="M6 1C2 1 2 4 5 5M1 13c2 2 4 1 5-1M10 1h4v8" stroke="#222" /><path d="M5 13 14 9" stroke={R} strokeWidth="1.200" /><path d="M8 4V10M6 8l2 3 2-3" stroke="#e06010" strokeWidth="1.200" /></>,
  pipe: <><path d="M3 7 12 2C16 1 16 7 14 9L5 14C1 14 0 9 3 7Z" fill="#7d9ce0" stroke="#6680b8" /><ellipse cx="4" cy="11" rx="3" ry="3.500" fill="#c8d4f0" stroke="#6680b8" /></>,
};

const Chk = () => (
  <div className="w-[13px] h-[13px] border border-[#222] bg-white flex items-center justify-center shrink-0">
    <svg width="11" height="11" viewBox="0 0 11 11" className="block"><path d="M1.500 5.500 4.500 9 10 1.500" stroke="#10b830" strokeWidth="2.600" fill="none" /></svg>
  </div>
);

export default function App() {
  return (
    <div className="w-[1258px] h-[799px] overflow-hidden flex flex-col bg-[#e8e8e8] relative">
      <svg className="absolute w-0 h-0">
        <defs>
          <linearGradient id="gB" x1="0" y1="0" x2="1" y2="0.400"><stop offset="0" stopColor="#eef2fe" /><stop offset="1" stopColor="#7e9cec" /></linearGradient>
          <linearGradient id="gB2" x1="0" y1="0" x2="1" y2="0"><stop offset="0" stopColor="#c8d6fb" /><stop offset="1" stopColor="#5e76e0" /></linearGradient>
          <linearGradient id="gY" x1="0" y1="0" x2="1" y2="0"><stop offset="0" stopColor="#ffb020" /><stop offset="1" stopColor="#ffe070" /></linearGradient>
          <linearGradient id="gY2" x1="0" y1="0" x2="1" y2="0"><stop offset="0" stopColor="#ffe080" /><stop offset="1" stopColor="#e89020" /></linearGradient>
          <radialGradient id="spec"><stop offset="0" stopColor="#ffe860" /><stop offset=".5" stopColor="#ffd030" stopOpacity=".6" /><stop offset="1" stopColor="#ffc000" stopOpacity="0" /></radialGradient>
        </defs>
      </svg>

      {/* menu */}
      <div className="h-[40px] shrink-0 flex items-center pb-[1px] bg-[#e6e6e6] text-[22px] text-[#111] whitespace-nowrap font-['Liberation_Sans','Noto_Sans_CJK_SC',sans-serif]">
        {menu.map(([a, b, m]) => (
          <span key={b} className={m}>
            {a}(<span className="underline underline-offset-[3px]">{b}</span>)
          </span>
        ))}
        <span className="mr-[15px]">GC工具箱</span>
        <span>帮助(<span className="underline underline-offset-[3px]">H</span>)</span>
      </div>

      {/* row 1 */}
      <div className="h-[46px] shrink-0 flex items-center w-[1183px] bg-gradient-to-b from-[#e4e4e4] to-[#d6d6d6] border-t border-[#c4c4c4] border-r">
        <I n="redo" w="w-[20px]" />
        <Sep />
        <I n="gear" w="w-[40px]" />
        <Caret w="w-[12px]" />
        <Sep />
        <I n="sync" w="w-[33px]" />
        <I n="sq2" />
        <I n="list" />
        <div className="w-[2px] shrink-0" />
        <Sep />
        <div className="ml-[5px] w-[255px] h-[38px] shrink-0 border-2 border-[#bcbcbc] bg-[#e2e2e2] flex items-center justify-between px-[3px]">
          <span className={`text-[23px] text-[#a4a4a4] ${cjk}`}>查找命令</span>
          <svg width="24" height="24" viewBox="0 0 24 24" fill="none" className="mr-[2px]">
            <circle cx="15" cy="9" r="6.500" fill="#fff" stroke="#222" strokeWidth="1.400" />
            <path d="M10 14 3 21" stroke="#333" strokeWidth="3" />
          </svg>
        </div>
        <div className="w-[3px] shrink-0" />
        <I n="pyr" />
        <I n="grid" />
        <I n="ybox" />
        <I n="frame" />
        <I n="bfun" />
        <Caret w="w-[14px]" cls="self-end mb-[9px]" />
        <Sep />
        <Grip />
        <div className="w-[30px] h-[33px] ml-[2px] shrink-0 rounded-[3px] border border-[#666] bg-white flex items-center justify-center">
          <Svg s={26}>{ic.chain}</Svg>
        </div>
        <div className="w-[6px] shrink-0" />
        <Sep />
        <I n="l1" w="w-[30px]" />
        <I n="l2" />
        <I n="l3" />
        <I n="l4" />
        <I n="l5" />
        <Sep cls="ml-[3px]" />
        <I n="a1" w="w-[33px]" />
        <I n="a2" />
        <I n="a3" />
        <I n="a4" />
        <Sep />
        <I n="c1" w="w-[34px]" />
        <I n="c2" />
        <I n="c3" />
        <I n="c4" />
        <Sep />
        <div className="w-[3px] shrink-0" />
        <I n="e1" w="w-[32px]" />
        <I n="e2" />
        <I n="e3" />
        <Caret cls="self-end mb-[9px]" />
      </div>

      {/* row 2 */}
      <div className="h-[34px] shrink-0 flex items-center">
        <div className="h-[34px] w-[643px] shrink-0 flex items-center bg-gradient-to-b from-[#dcdcdc] to-[#d2d2d2] border-t border-[#f0f0f0]">
          <I n="cutL" w="w-[18px]" />
          <I n="tplus" w="w-[32px]" />
          <Caret w="w-[12px]" />
          <I n="arch" />
          <I n="hbox" />
          <I n="slit" />
          <I n="plate" />
          <I n="pocket" />
          <I n="band" />
          <I n="dashc" />
          <div className="w-[2px] shrink-0" />
          <Sep />
          <I n="cubeL" w="w-[32px]" />
          <I n="orb" w="w-[33px]" />
          <I n="f1" />
          <I n="f2" />
          <I n="f3" />
          <I n="bowl" />
          <I n="tcorner" w="w-[30px]" />
          <I n="tchamf" w="w-[30px]" />
          <I n="pyrR" />
          <I n="cyl" />
          <I n="gem" />
          <Caret w="w-[12px]" cls="self-end mb-[4px]" />
        </div>
        <div className="h-[34px] w-[426px] shrink-0 flex items-center bg-gradient-to-b from-[#dcdcdc] to-[#d2d2d2] border-t border-[#f0f0f0] border-l border-r border-[#c4c4c4]">
          <Grip />
          <div className="w-[2px] shrink-0" />
          <I n="wrdoc" />
          <I n="trim1" />
          <I n="trim2" />
          <I n="scurve" />
          <I n="fil" />
          <I n="sheet" />
          <I n="brk" />
          <I n="flow" />
          <I n="filG" />
          <I n="tplus" />
          <I n="tminus" />
          <I n="tx" />
          <I n="chamfR" />
          <Caret w="w-[12px]" cls="self-end mb-[4px]" />
        </div>
      </div>

      {/* row 3 */}
      <div className="h-[45px] shrink-0 flex items-center bg-gradient-to-b from-[#dcdcdc] to-[#c6c6c6] border-t border-[#f4f4f4] border-b-[3px] border-b-[#9e9e9e]">
        <I n="targ" w="w-[13px]" />
        <I n="patch" />
        <I n="outl" />
        <I n="br1" />
        <I n="br2" />
        <I n="pl1" />
        <I n="pl2" />
        <I n="ext" />
        <I n="filG" />
        <div className="w-[20px] shrink-0" />
        <Chev />
        <Sep cls="ml-[3px]" />
        <Grip />
        <div className="w-[7px] shrink-0" />
        <I n="fit" w="w-[27px]" />
        <Caret w="w-[15px]" />
        <I n="lens" />
        <Caret w="w-[15px]" />
        <I n="cubeS" />
        <Caret w="w-[15px]" />
        <I n="cubeE" />
        <I n="cubeS" />
        <I n="cubeW" />
        <I n="cubeH" />
        <div className="w-[31px] h-[33px] ml-[1px] shrink-0 rounded-[3px] border border-[#666] bg-white flex items-center justify-center">
          <Svg s={26}>{ic.persp}</Svg>
        </div>
        <I n="back" w="w-[28px]" />
        <Caret w="w-[18px]" />
        <Sep />
        <I n="pane" w="w-[26px]" />
        <div className="w-[27px] shrink-0" />
        <Chev />
        <div className="w-[2px] shrink-0" />
        <Sep />
        <div className="w-[6px] shrink-0" />
        <I n="move" w="w-[32px]" />
        <I n="lift" />
        <I n="hand" />
        <I n="cone" />
        <I n="rep" />
        <I n="del" />
        <I n="res" />
        <I n="sync" />
        <I n="sq2" />
        <I n="xyz" />
        <Caret w="w-[14px]" cls="self-end mb-[5px]" />
        <Sep />
        <Grip />
        <I n="asm" />
        <I n="blkP" />
        <Caret w="w-[18px]" />
        <I n="blkP" w="w-[27px]" />
        <div className="w-[1px] shrink-0" />
        <I n="blkD" />
        <I n="mirror" />
        <I n="cons" />
      </div>

      {/* row 4 */}
      <div className="h-[47px] shrink-0 flex items-center pt-[3px] bg-gradient-to-b from-[#e4e4e4] to-[#dedede] border-b border-[#333]">
        <Combo t="作部件内" cls="w-[202px] -ml-[2px]" />
        <I4 n="ring2" w="w-[32px]" />
        <Sep cls="my-[3px]" />
        <I4 n="wrf" w="w-[28px]" s={16} />
        <I4 n="tbox" w="w-[18px]" s={20} />
        <div className="w-[1px] shrink-0" />
        <Caret w="w-[14px]" />
        <I4 n="fsel" w="w-[16px]" s={19} />
        <Caret w="w-[18px]" />
        <I4 n="fpt" w="w-[16px]" s={18} />
        <Combo t="全部" cls="w-[96px] ml-[9px]" />
        <I4 n="chainG" w="w-[31px]" s={18} />
        <Sep cls="my-[3px]" />
        <I4 n="hex" w="w-[24px]" s={17} />
        <I4 n="dsq" w="w-[22px]" s={17} />
        <Caret w="w-[16px]" />
        <Combo t="内侧" cls="w-[217px] ml-[2px]" />
        <div className="w-[7px] shrink-0" />
        <Sep cls="my-[3px]" />
        <div className="w-[3px] shrink-0" />
        <Bx n="v1" s={22} />
        <I4 n="v2" s={18} w="w-[22px]" />
        <I4 n="v3" s={16} />
        <div className="w-[3px] shrink-0" />
        <Sep cls="my-[3px]" />
        <div className="w-[3px] shrink-0" />
        <Bx n="all" s={22} />
        <Bx n="seg" s={20} />
        <Bx n="seg2" s={20} />
        <I4 n="sc" s={18} />
        <Bx n="spl" s={22} />
        <I4 n="perp" s={18} />
        <Bx n="ctr" s={22} />
        <I4 n="quad" s={18} />
        <Bx n="cross" s={20} />
        <Bx n="pm" s={20} />
        <I4 n="srf" s={18} />
        <div className="w-[2px] shrink-0" />
        <Sep cls="my-[3px]" />
        <I4 n="gridI" w="w-[26px]" s={15} />
        <Sep cls="my-[3px]" />
        <I4 n="rgb" w="w-[28px]" s={16} />
        <I4 n="rbf" w="w-[18px]" s={16} />
      </div>

      {/* main */}
      <div className="flex-1 min-h-0 flex">
        <div className="w-[890px] shrink-0 bg-gradient-to-b from-[#27292b] to-[#505355]">
          <svg width="890" height="587" viewBox="0 212 890 587" className="block">
            {tube.map((p, i) => (
              <path key={i} d={p.d} fill={p.c} />
            ))}
            <ellipse cx="120" cy="421" rx="9" ry="6" fill="url(#spec)" transform="rotate(-45 120 421)" />
            <ellipse cx="151" cy="526" rx="14" ry="4" fill="url(#spec)" transform="rotate(35 151 526)" />
          </svg>
        </div>

        {/* navigator */}
        <div className="flex-1 min-w-0 bg-[#ebebeb] border-l-2 border-[#4a4a4a] relative">
          <div className="h-[52px] flex items-center pl-[13px] pt-[13px]">
            <div className="w-[22px] h-[21px] border-2 border-t-[3px] border-[#111]" />
            <span className={`ml-[14px] text-[21px] font-bold text-[#111] ${cjk}`}>部件导航器</span>
          </div>
          <div className="ml-[10px] border-t border-l border-[#808080] bg-white h-[535px] overflow-hidden">
            <div className={`h-[29px] flex bg-gradient-to-b from-[#f8f8f8] to-[#e6e6e6] border-b border-[#c8c8c8] text-[18px] text-[#333] ${cjk}`}>
              <div className="w-[169px] shrink-0 flex items-center pl-[6px]">
                <span>名称</span>
                <div className="ml-[20px] w-0 h-0 border-l-[5px] border-r-[5px] border-b-[6px] border-l-transparent border-r-transparent border-b-[#222]" />
              </div>
              <div className="flex-1 flex items-center pl-[6px] border-l border-[#c8c8c8]">特征类型</div>
            </div>
            {rows.map((r, i) => (
              <div key={r.t + i} className={`h-[28px] flex border-b border-[#e4e4e4] ${i % 2 ? "bg-[#f6f6f6]" : "bg-white"} text-[18px] text-[#333] ${cjk}`}>
                <div className="w-[169px] shrink-0 flex items-center relative pt-[1px]">
                  {r.lvl === 0 ? (
                    <>
                      <div className={`absolute left-[9px] border-l border-dotted border-[#888] ${i === 0 ? "top-[14px] bottom-0" : i === 4 ? "top-0 h-[14px]" : "top-0 bottom-0"}`} />
                      <div className="absolute left-[9px] top-[14px] w-[10px] border-t border-dotted border-[#888]" />
                      {r.box && (
                        <div className="absolute left-[5px] top-[9px] w-[9px] h-[9px] border border-[#8a8a8a] bg-white flex items-center justify-center text-[9px] leading-none font-['Liberation_Sans',sans-serif] text-[#222]">
                          {r.box === "+" ? "+" : "−"}
                        </div>
                      )}
                      <div className={`${r.check ? "ml-[21px]" : "ml-[18px]"} flex items-center`}>
                        {r.check && (
                          <svg width="13" height="13" viewBox="0 0 13 13" className="mr-[2px] block"><path d="M1.500 7 5 11 11.500 2" stroke="#10b040" strokeWidth="3" fill="none" /></svg>
                        )}
                        <svg width="16" height="17" viewBox="0 0 16 16" fill="none" className="block overflow-visible">{tico[r.icon]}</svg>
                      </div>
                      <span className={r.check ? "ml-[2px]" : "ml-[4px]"}>{r.t}</span>
                    </>
                  ) : (
                    <>
                      <div className={`absolute left-[28px] border-l border-dotted border-[#888] ${r.bold ? "top-0 h-[14px]" : "top-0 bottom-0"}`} />
                      <div className="absolute left-[28px] top-[14px] w-[12px] border-t border-dotted border-[#888]" />
                      <div className="ml-[40px] flex items-center">
                        <Chk />
                        <svg width="16" height="16" viewBox="0 0 16 16" fill="none" className="block ml-[2px] overflow-visible">{tico[r.icon]}</svg>
                      </div>
                      <span className={`ml-[2px] whitespace-nowrap ${r.gray ? "text-[#a8a8a8]" : ""} ${r.bold ? "font-bold" : ""}`}>{r.t}</span>
                    </>
                  )}
                </div>
                <div className={`flex-1 flex items-center pl-[4px] border-l border-[#e0e0e0] whitespace-nowrap text-[18.5px] font-['Noto_Sans',sans-serif] ${r.gray ? "text-[#a8a8a8]" : ""} ${r.bold ? "font-bold" : ""}`}>
                  {r.ty}
                </div>
              </div>
            ))}
            {Array.from({ length: 8 }).map((_, i) => (
              <div key={i} className={`h-[28px] flex border-b border-[#e4e4e4] ${i % 2 ? "bg-[#f6f6f6]" : "bg-white"}`}>
                <div className="w-[169px] shrink-0" />
                <div className="flex-1 border-l border-[#e0e0e0]" />
              </div>
            ))}
          </div>

          {/* watermark */}
          <div className="absolute left-[64px] bottom-[6px] flex items-start">
            <svg width="87" height="97" viewBox="50 50 260 290" className="block shrink-0">
              <path d="M178 55 298 125V265L178 335 58 265V125Z" fill="#72c8f0" />
              <path d="M178 55 58 125V265L130 307 115 235 125 165 178 130 240 165C245 120 225 85 178 55Z" fill="#72a2d6" />
              <path d="M220 80C250 120 250 160 240 170M298 180C270 215 240 230 232 230M230 320C180 300 130 270 115 236M60 210C75 180 100 165 125 160" stroke="#fff" strokeWidth="2" fill="none" />
              <path d="M178 130 237 165V232L178 265 120 232V165Z" fill="#fff" />
              <path d="M178 135 232 167 178 198 125 167Z" fill="#72a2d6" />
              <path d="M125 170 176 200V260L125 230Z" fill="#72a2d6" />
              <path d="M232 170 180 200V260L232 230Z" fill="#72c8f0" />
            </svg>
            <div className="ml-[8px] mt-[11px] flex flex-col text-[#6fc6ef] w-[205px]">
              <div className={`text-[46px] leading-[46px] tracking-[0.5px] font-black whitespace-nowrap ${cjk}`}>3D世界网</div>
              <div className="mt-[8px] text-[14px] leading-[14px] tracking-[5.300px] font-['Liberation_Sans',sans-serif] whitespace-nowrap">WWW.3DSJW.COM</div>
            </div>
          </div>
        </div>
      </div>
    </div>
  );
}
